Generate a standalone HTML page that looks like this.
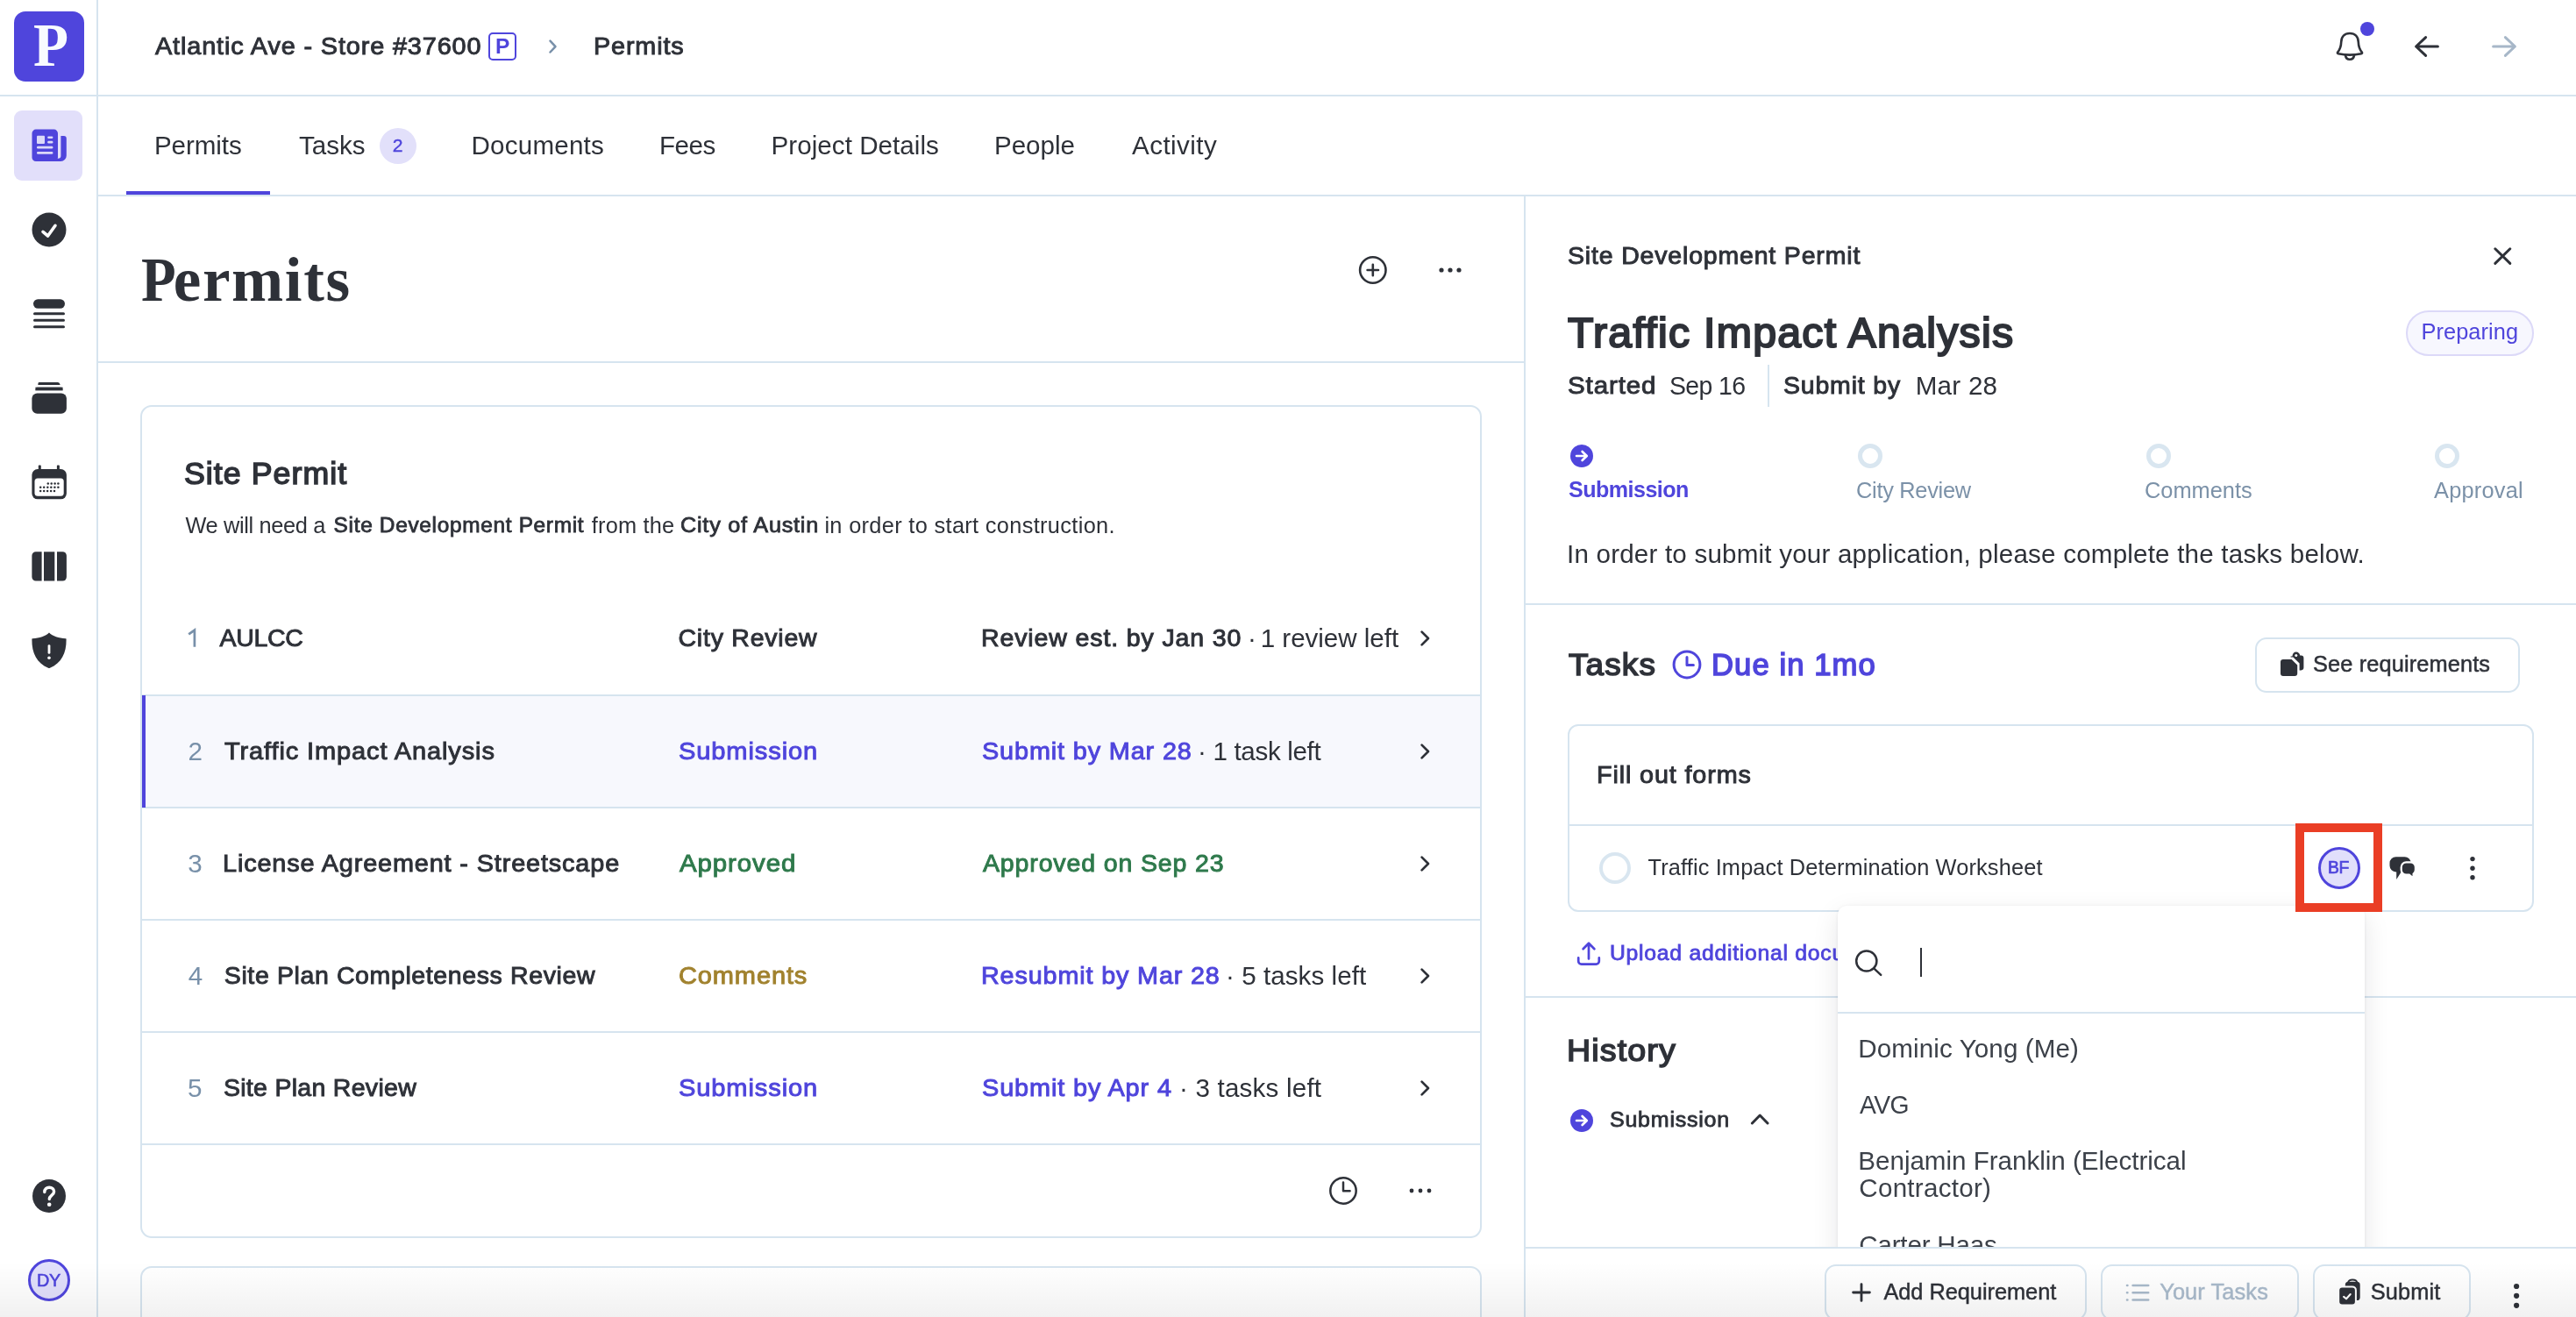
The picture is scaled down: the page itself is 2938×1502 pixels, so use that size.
<!DOCTYPE html>
<html><head><meta charset="utf-8"><title>Permits</title>
<style>
*{box-sizing:border-box;margin:0;padding:0}
html,body{width:2938px;height:1502px;overflow:hidden;background:#fff}
body{position:relative;font-family:"Liberation Sans",sans-serif;color:#2e3138}
.a{position:absolute}
.t{position:absolute;white-space:nowrap;line-height:1;display:block}
.ln{position:absolute;background:#d6e4ef}
svg{position:absolute;overflow:visible}
.card{position:absolute;border:2px solid #d6e4ef;background:#fff}
.btn{position:absolute;border:2px solid #d6e4ef;border-radius:13px;background:#fff;height:64px;top:1442px}
.ring{position:absolute;border-radius:50%;border:5px solid #d9e6f0;width:28px;height:28px;top:506px}
.av{position:absolute;border-radius:50%;border:3px solid #4f45dc;background:#e1dffb;width:48px;height:48px}
</style></head>
<body>
<div id="root" style="position:absolute;left:0;top:0;width:2938px;height:1502px;overflow:hidden;will-change:transform">
<!-- structural lines -->
<div class="ln" style="left:0;top:108px;width:2938px;height:2px"></div>
<div class="ln" style="left:110px;top:0;width:2px;height:1502px"></div>
<div class="ln" style="left:112px;top:222px;width:2826px;height:2px"></div>
<div class="ln" style="left:112px;top:412px;width:1626px;height:2px"></div>
<div class="ln" style="left:1738px;top:224px;width:2px;height:1278px"></div>
<div class="ln" style="left:1740px;top:688px;width:1198px;height:2px"></div>
<div class="ln" style="left:1740px;top:1136px;width:1198px;height:2px"></div>
<div class="a" style="left:144px;top:218px;width:164px;height:4px;background:#4f45dc"></div>

<!-- sidebar -->
<div class="a" style="left:16px;top:13px;width:80px;height:80px;border-radius:13px;background:#4f45dc"></div>
<div class="a" style="left:16px;top:126px;width:78px;height:80px;border-radius:9px;background:#e2dffa"></div>
<!-- newspaper -->
<svg style="left:36px;top:147px" width="41" height="38" viewBox="0 0 41 38">
<rect x="0.5" y="0.6" width="29.5" height="36.4" rx="4.5" fill="#4f45dc"/>
<path d="M33.4 8 h3.4 a3 3 0 0 1 3 3 v19.5 a6.5 6.5 0 0 1 -6.5 6.5 h-9 v-3.2 h6.1 a3 3 0 0 0 3 -3 z" fill="#4f45dc"/>
<rect x="6" y="7.8" width="9" height="9.2" rx="1" fill="#dcd9f8"/>
<rect x="18.2" y="8.4" width="6.2" height="2.6" rx="1.2" fill="#dcd9f8"/>
<rect x="18.2" y="13.8" width="6.2" height="2.6" rx="1.2" fill="#dcd9f8"/>
<rect x="6" y="19.8" width="18.4" height="2.8" rx="1.3" fill="#dcd9f8"/>
<rect x="6" y="26" width="18.4" height="2.8" rx="1.3" fill="#dcd9f8"/>
</svg>
<!-- check circle -->
<svg style="left:36px;top:242px" width="40" height="40" viewBox="0 0 40 40"><circle cx="20" cy="20" r="19.5" fill="#2e3138"/><path d="M13 22.4 L18.6 27 L27 15.3" fill="none" stroke="#fff" stroke-width="3.6" stroke-linecap="round" stroke-linejoin="round"/></svg>
<!-- list -->
<svg style="left:38px;top:341px" width="36" height="34" viewBox="0 0 36 34"><rect x="0" y="0.3" width="36" height="10.4" rx="5.2" fill="#2e3138"/><g stroke="#2e3138" stroke-width="3" stroke-linecap="round"><path d="M1.5 16.8H34.5M1.5 24.3H34.5M1.5 31.8H34.5"/></g></svg>
<!-- stack -->
<svg style="left:36px;top:435px" width="40" height="37" viewBox="0 0 40 37"><rect x="0.4" y="13.4" width="39.5" height="23.4" rx="6" fill="#2e3138"/><path d="M4.4 6.7 h31.2 v3.5 h-31.2z" fill="#2e3138"/><path d="M8.3 1 Q9 1 10 1 h20 q2 0 2.7 2.9 h-25.4 Q7.3 1 8.3 1z" fill="#2e3138"/><path d="M5.8 6.7 h28.4 l1.4 3.5 h-31.2z" fill="#2e3138"/></svg>
<!-- calendar -->
<svg style="left:36px;top:530px" width="40" height="40" viewBox="0 0 40 40"><rect x="0.4" y="5" width="39.5" height="34.3" rx="6.5" fill="#2e3138"/><rect x="7.8" y="0.6" width="3" height="8" rx="1" fill="#2e3138"/><rect x="28.9" y="0.6" width="3" height="8" rx="1" fill="#2e3138"/><rect x="3.5" y="15.6" width="33.2" height="20.2" rx="3.5" fill="#fff"/>
<g fill="#2e3138"><circle cx="18.8" cy="21.4" r="1.25"/><circle cx="22.7" cy="21.4" r="1.25"/><circle cx="26.6" cy="21.4" r="1.25"/><circle cx="30.4" cy="21.4" r="1.25"/><circle cx="10.2" cy="25.7" r="1.25"/><circle cx="14.2" cy="25.7" r="1.25"/><circle cx="18.3" cy="25.7" r="1.25"/><circle cx="22.3" cy="25.7" r="1.25"/><circle cx="26.4" cy="25.7" r="1.25"/><circle cx="30.4" cy="25.7" r="1.25"/><circle cx="10.2" cy="30.0" r="1.25"/><circle cx="14.2" cy="30.0" r="1.25"/><circle cx="18.1" cy="30.0" r="1.25"/><circle cx="22.1" cy="30.0" r="1.25"/><circle cx="26.0" cy="30.0" r="1.25"/></g></svg>
<!-- columns -->
<svg style="left:36px;top:629px" width="40" height="34" viewBox="0 0 40 34"><path d="M4.9 0.3 H11.6 V33.5 H4.9 A4.5 4.5 0 0 1 0.4 29 V4.8 A4.5 4.5 0 0 1 4.9 0.3z" fill="#2e3138"/><rect x="14" y="0.3" width="12.3" height="33.2" fill="#2e3138"/><path d="M29 0.3 H35.4 A4.5 4.5 0 0 1 39.9 4.8 V29 A4.5 4.5 0 0 1 35.4 33.5 H29z" fill="#2e3138"/></svg>
<!-- shield -->
<svg style="left:36px;top:721px" width="40" height="42" viewBox="0 0 40 42"><path d="M20 0.6 C16 4.6 9 7 1.2 7.2 C0.6 7.2 0.4 7.6 0.4 8.2 C0.2 24 6 35 19 40.8 Q20 41.3 21 40.8 C34 35 39.8 24 39.6 8.2 C39.6 7.6 39.4 7.2 38.8 7.2 C31 7 24 4.6 20 0.6z" fill="#2e3138"/><rect x="18.6" y="14.2" width="2.8" height="10.6" rx="1.4" fill="#fff"/><circle cx="20" cy="29.2" r="1.8" fill="#fff"/></svg>
<!-- help -->
<svg style="left:37px;top:1345px" width="38" height="38" viewBox="0 0 38 38"><circle cx="19" cy="19" r="19" fill="#2e3138"/><path d="M13.8 14.6 C13.8 11 16.2 9.3 19.2 9.3 C22.3 9.3 24.6 11.2 24.6 14 C24.6 18.2 19.3 18 19.3 22.6" fill="none" stroke="#fff" stroke-width="3.4" stroke-linecap="round"/><circle cx="19.2" cy="28.8" r="2.3" fill="#fff"/></svg>
<!-- DY avatar -->
<div class="av" style="left:32px;top:1436px"></div>


<!-- cards -->
<div class="card" style="left:160px;top:462px;width:1530px;height:950px;border-radius:13px"></div>
<div class="card" style="left:160px;top:1444px;width:1530px;height:120px;border-radius:13px"></div>
<div class="a" style="left:162px;top:794px;width:1526px;height:126px;background:#f7f8fd"></div>
<div class="ln" style="left:162px;top:792px;width:1526px;height:2px"></div>
<div class="ln" style="left:162px;top:920px;width:1526px;height:2px"></div>
<div class="ln" style="left:162px;top:1048px;width:1526px;height:2px"></div>
<div class="ln" style="left:162px;top:1176px;width:1526px;height:2px"></div>
<div class="ln" style="left:162px;top:1304px;width:1526px;height:2px"></div>
<div class="a" style="left:162px;top:793px;width:4px;height:128px;background:#4f45dc"></div>

<!-- panel -->
<div class="a" style="left:2744px;top:354px;width:146px;height:52px;border-radius:26px;border:2px solid #dcd9f8;background:#f7f7fe"></div>
<div class="ln" style="left:2016px;top:416px;width:2px;height:48px"></div>
<div class="ring" style="left:2119px"></div><div class="ring" style="left:2448px"></div><div class="ring" style="left:2777px"></div>
<div class="a" style="left:2572px;top:727px;width:302px;height:63px;border:2px solid #d6e4ef;border-radius:13px"></div>
<div class="card" style="left:1788px;top:826px;width:1102px;height:214px;border-radius:12px"></div>
<div class="ln" style="left:1790px;top:940px;width:1098px;height:2px"></div>
<div class="a" style="left:1824px;top:972px;width:36px;height:36px;border-radius:50%;border:4px solid #d9e6f0"></div>

<!-- P badge -->
<div class="a" style="left:557px;top:37px;width:32px;height:32px;border:2px solid #4f45dc;border-radius:5px"></div>
<svg style="left:620px;top:40px" width="20" height="28" viewBox="0 0 20 28"><path d="M7.5 6.7 L13.5 13.1 L7.5 19.5" fill="none" stroke="#7890a9" stroke-width="2.5" stroke-linecap="round" stroke-linejoin="round"/></svg>
<!-- tasks badge -->
<div class="a" style="left:433px;top:145.5px;width:42px;height:41px;border-radius:50%;background:#e2e0fa"></div>
<!-- bell -->
<svg style="left:2660px;top:32px" width="40" height="42" viewBox="0 0 40 42"><path d="M20 6 C14 6 10.4 10 10.2 16 C10 22 8.6 24.6 6.2 27.6 C5.6 28.4 6 29 7 29.2 C15 31 25 31 33 29.2 C34 29 34.4 28.4 33.8 27.6 C31.4 24.6 30 22 29.8 16 C29.6 10 26 6 20 6z" fill="none" stroke="#2e3138" stroke-width="2.6" stroke-linejoin="round"/><path d="M15 31 C15.4 34 17.4 35.8 20 35.8 C22.6 35.8 24.6 34 25 31" fill="none" stroke="#2e3138" stroke-width="2.6" stroke-linecap="round"/></svg>
<div class="a" style="left:2692px;top:25px;width:16px;height:16px;border-radius:50%;background:#4f45dc"></div>
<svg style="left:2750px;top:38px" width="36" height="30" viewBox="0 0 36 30"><path d="M5.6 15 H30.4 M16.6 4.6 L5.6 15 L16.6 25.4" fill="none" stroke="#2e3138" stroke-width="3" stroke-linecap="round" stroke-linejoin="round"/></svg>
<svg style="left:2838px;top:38px" width="36" height="30" viewBox="0 0 36 30"><path d="M5.6 15 H30.4 M19.4 4.6 L30.4 15 L19.4 25.4" fill="none" stroke="#a7b7c8" stroke-width="3" stroke-linecap="round" stroke-linejoin="round"/></svg>
<!-- title plus circle & dots -->
<svg style="left:1549px;top:291px" width="34" height="34" viewBox="0 0 34 34"><circle cx="16.8" cy="17" r="14.7" fill="none" stroke="#2e3138" stroke-width="2.6"/><path d="M16.8 10.8V23.2M10.6 17H23" stroke="#2e3138" stroke-width="2.6" stroke-linecap="round"/></svg>
<svg style="left:1640px;top:304px" width="30" height="8" viewBox="0 0 30 8"><g fill="#2e3138"><circle cx="4" cy="4" r="2.6"/><circle cx="14" cy="4" r="2.6"/><circle cx="24" cy="4" r="2.6"/></g></svg>
<!-- row chevrons -->
<svg style="left:1616px;top:718px" width="20" height="20" viewBox="0 0 20 20"><path d="M5.6 2.6 L13 10 L5.6 17.4" fill="none" stroke="#2e3138" stroke-width="2.7" stroke-linecap="round" stroke-linejoin="round"/></svg>
<svg style="left:1616px;top:847px" width="20" height="20" viewBox="0 0 20 20"><path d="M5.6 2.6 L13 10 L5.6 17.4" fill="none" stroke="#2e3138" stroke-width="2.7" stroke-linecap="round" stroke-linejoin="round"/></svg>
<svg style="left:1616px;top:975px" width="20" height="20" viewBox="0 0 20 20"><path d="M5.6 2.6 L13 10 L5.6 17.4" fill="none" stroke="#2e3138" stroke-width="2.7" stroke-linecap="round" stroke-linejoin="round"/></svg>
<svg style="left:1616px;top:1103px" width="20" height="20" viewBox="0 0 20 20"><path d="M5.6 2.6 L13 10 L5.6 17.4" fill="none" stroke="#2e3138" stroke-width="2.7" stroke-linecap="round" stroke-linejoin="round"/></svg>
<svg style="left:1616px;top:1231px" width="20" height="20" viewBox="0 0 20 20"><path d="M5.6 2.6 L13 10 L5.6 17.4" fill="none" stroke="#2e3138" stroke-width="2.7" stroke-linecap="round" stroke-linejoin="round"/></svg>
<!-- card footer clock & dots -->
<svg style="left:1515px;top:1341px" width="34" height="34" viewBox="0 0 34 34"><circle cx="17" cy="17" r="14.7" fill="none" stroke="#2e3138" stroke-width="2.5"/><path d="M17 7.4V17.2H24.6" fill="none" stroke="#2e3138" stroke-width="2.5" stroke-linecap="round" stroke-linejoin="round"/></svg>
<svg style="left:1606px;top:1354px" width="30" height="8" viewBox="0 0 30 8"><g fill="#2e3138"><circle cx="4" cy="4" r="2.4"/><circle cx="14" cy="4" r="2.4"/><circle cx="24" cy="4" r="2.4"/></g></svg>
<!-- panel close -->
<svg style="left:2840px;top:278px" width="28" height="28" viewBox="0 0 28 28"><path d="M5.8 5.8 L22.8 22.4 M22.8 5.8 L5.8 22.4" stroke="#2e3138" stroke-width="3" stroke-linecap="round"/></svg>
<!-- step 1 -->
<svg style="left:1791px;top:507px" width="26" height="26" viewBox="0 0 26 26"><circle cx="13" cy="13" r="13" fill="#4f45dc"/><path d="M7 13 H18.6 M13.6 8 L18.8 13 L13.6 18" fill="none" stroke="#fff" stroke-width="2.6" stroke-linecap="round" stroke-linejoin="round"/></svg>
<!-- tasks clock -->
<svg style="left:1907px;top:741px" width="34" height="34" viewBox="0 0 34 34"><circle cx="17" cy="17" r="14.9" fill="none" stroke="#4f45dc" stroke-width="3"/><path d="M17 8.4V17.4H24.4" fill="none" stroke="#4f45dc" stroke-width="3" stroke-linecap="round" stroke-linejoin="round"/></svg>
<!-- see requirements icon -->
<svg style="left:2600px;top:742px" width="29" height="30" viewBox="0 0 29 30"><path d="M12.6 6.4 H14.4 C14.8 3.6 16.4 1.6 18.8 1.6 C21.2 1.6 22.8 3.4 23.2 5.4 H24.4 A3 3 0 0 1 27.4 8.4 V19.4 A3 3 0 0 1 24.4 22.4 H22.6 V14.4 L15.4 7.6 H12.6z" fill="#2e3138"/><circle cx="18.8" cy="5.6" r="1.5" fill="#fff"/><path d="M4 10 H13.6 L20.2 16.4 V26 A3 3 0 0 1 17.2 29 H4 A3 3 0 0 1 1 26 V13 A3 3 0 0 1 4 10z" fill="#2e3138"/></svg>
<!-- chat icon -->
<svg style="left:2724px;top:975px" width="32" height="30" viewBox="0 0 32 30"><path d="M8.6 2.2 H18.6 A7.1 7.1 0 0 1 25.7 9.3 V12.3 A7.1 7.1 0 0 1 18.6 19.4 H14.6 L9.2 28 V19.4 H8.6 A7.1 7.1 0 0 1 1.5 12.3 V9.3 A7.1 7.1 0 0 1 8.6 2.2z" fill="#2e3138"/><path d="M20.4 8.4 H25.2 A5.7 5.7 0 0 1 30.9 14.1 V17 A5.7 5.7 0 0 1 28.6 21.6 V26.6 L23.8 22.7 H20.4 A5.7 5.7 0 0 1 14.7 17 V14.1 A5.7 5.7 0 0 1 20.4 8.4z" fill="#2e3138" stroke="#fff" stroke-width="2.2"/></svg>
<!-- kebab -->
<svg style="left:2816px;top:975px" width="8" height="30" viewBox="0 0 8 30"><g fill="#2e3138"><circle cx="4" cy="4.6" r="2.7"/><circle cx="4" cy="15.2" r="2.7"/><circle cx="4" cy="25.8" r="2.7"/></g></svg>
<!-- upload icon -->
<svg style="left:1797px;top:1072px" width="31" height="31" viewBox="0 0 31 31"><path d="M15 21.4 V4.4 M8.6 10.2 L15 3.8 L21.4 10.2" fill="none" stroke="#4f45dc" stroke-width="2.7" stroke-linecap="round" stroke-linejoin="round"/><path d="M3.2 20.4 V24.2 A3.4 3.4 0 0 0 6.6 27.6 H23.4 A3.4 3.4 0 0 0 26.8 24.2 V20.4" fill="none" stroke="#4f45dc" stroke-width="2.7" stroke-linecap="round" stroke-linejoin="round"/></svg>
<!-- history icon -->
<svg style="left:1791px;top:1265px" width="26" height="26" viewBox="0 0 26 26"><circle cx="13" cy="13" r="13" fill="#4f45dc"/><path d="M7 13 H18.6 M13.6 8 L18.8 13 L13.6 18" fill="none" stroke="#fff" stroke-width="2.6" stroke-linecap="round" stroke-linejoin="round"/></svg>
<svg style="left:1993px;top:1266px" width="28" height="20" viewBox="0 0 28 20"><path d="M5.4 15 L14.2 6 L23 15" fill="none" stroke="#2e3138" stroke-width="3" stroke-linecap="round" stroke-linejoin="round"/></svg>

<svg style="left:212px;top:714px" width="16" height="28" viewBox="0 0 16 28"><path d="M3.2 9.4 L9.9 4.6 V23.8" fill="none" stroke="#7890a9" stroke-width="2.7" stroke-linejoin="miter"/></svg>


<span class="t" style="left:176.7px;top:38.0px;font-size:28.47px;-webkit-text-stroke:0.97px #2e3138;color:#2e3138;letter-spacing:0.854px;transform:scaleX(1.0132);transform-origin:0 0;">Atlantic Ave - Store #37600</span>
<span class="t" style="left:677.2px;top:38.2px;font-size:28.47px;-webkit-text-stroke:0.97px #2e3138;color:#2e3138;letter-spacing:0.854px;transform:scaleX(1.0103);transform-origin:0 0;">Permits</span>
<span class="t" style="left:565.0px;top:40.6px;font-size:24.52px;font-weight:700;color:#4f45dc;letter-spacing:0.000px;transform:scaleX(1.0000);transform-origin:0 0;">P</span>
<span class="t" style="left:175.9px;top:150.9px;font-size:29.6px;color:#2e3138;letter-spacing:-0.067px;">Permits</span>
<span class="t" style="left:341.0px;top:150.9px;font-size:29.6px;color:#2e3138;letter-spacing:-0.012px;">Tasks</span>
<span class="t" style="left:447.7px;top:154.9px;font-size:21.14px;color:#4f45dc;letter-spacing:0.000px;-webkit-text-stroke:0.4px #4f45dc;">2</span>
<span class="t" style="left:537.5px;top:150.9px;font-size:29.6px;color:#2e3138;letter-spacing:0.203px;">Documents</span>
<span class="t" style="left:752.0px;top:150.9px;font-size:29.6px;color:#2e3138;letter-spacing:-0.498px;">Fees</span>
<span class="t" style="left:879.6px;top:150.9px;font-size:29.6px;color:#2e3138;letter-spacing:0.029px;">Project Details</span>
<span class="t" style="left:1134.0px;top:150.9px;font-size:29.6px;color:#2e3138;letter-spacing:-0.058px;">People</span>
<span class="t" style="left:1291.0px;top:150.9px;font-size:29.6px;color:#2e3138;letter-spacing:0.439px;">Activity</span>
<span class="t" style="left:160.6px;top:283.8px;font-size:71px;font-weight:700;font-family:'Liberation Serif',serif;color:#2e3138;letter-spacing:0.000px;transform:scaleX(0.9150);transform-origin:0 0;">P</span>
<span class="t" style="left:197.8px;top:283.8px;font-size:71px;font-weight:700;font-family:'Liberation Serif',serif;color:#2e3138;letter-spacing:1.612px;">ermits</span>
<span class="t" style="left:37.9px;top:16.2px;font-size:70.5px;font-weight:700;font-family:'Liberation Serif',serif;color:#f8fbff;letter-spacing:0.000px;transform:scaleX(0.9300);transform-origin:0 0;">P</span>
<span class="t" style="left:210.4px;top:523.0px;font-size:34.19px;-webkit-text-stroke:1.50px #2e3138;color:#2e3138;letter-spacing:1.026px;transform:scaleX(1.0437);transform-origin:0 0;">Site Permit</span>
<span class="t" style="left:211.4px;top:586.8px;font-size:25.37px;color:#2e3138;letter-spacing:-0.342px;">We will need a</span>
<span class="t" style="left:380.6px;top:587.2px;font-size:24.4px;-webkit-text-stroke:0.83px #2e3138;color:#2e3138;letter-spacing:0.692px;">Site Development Permit</span>
<span class="t" style="left:674.8px;top:586.8px;font-size:25.37px;color:#2e3138;letter-spacing:0.184px;">from the</span>
<span class="t" style="left:775.6px;top:587.2px;font-size:24.4px;-webkit-text-stroke:0.83px #2e3138;color:#2e3138;letter-spacing:0.732px;transform:scaleX(1.0356);transform-origin:0 0;">City of Austin</span>
<span class="t" style="left:940.4px;top:586.8px;font-size:25.37px;color:#2e3138;letter-spacing:0.326px;">in order to start construction.</span>
<span class="t" style="left:250.6px;top:713.4px;font-size:28.47px;-webkit-text-stroke:0.97px #2e3138;color:#2e3138;letter-spacing:-0.310px;">AULCC</span>
<span class="t" style="left:773.5px;top:713.4px;font-size:28.47px;-webkit-text-stroke:0.97px #2e3138;color:#2e3138;letter-spacing:0.778px;">City Review</span>
<span class="t" style="left:1119.0px;top:713.4px;font-size:28.47px;-webkit-text-stroke:0.97px #2e3138;color:#2e3138;letter-spacing:0.854px;transform:scaleX(1.0029);transform-origin:0 0;">Review est. by Jan 30</span>
<span class="t" style="left:1423.0px;top:712.9px;font-size:29.6px;color:#2e3138;letter-spacing:0.000px;">·</span>
<span class="t" style="left:1437.7px;top:712.9px;font-size:29.6px;color:#2e3138;letter-spacing:-0.031px;">1 review left</span>
<span class="t" style="left:214.5px;top:841.7px;font-size:29.6px;color:#7890a9;letter-spacing:0.000px;">2</span>
<span class="t" style="left:255.9px;top:842.2px;font-size:28.47px;-webkit-text-stroke:0.97px #2e3138;color:#2e3138;letter-spacing:0.854px;transform:scaleX(1.0197);transform-origin:0 0;">Traffic Impact Analysis</span>
<span class="t" style="left:773.5px;top:842.2px;font-size:28.47px;-webkit-text-stroke:0.97px #4f45dc;color:#4f45dc;letter-spacing:0.854px;transform:scaleX(1.0217);transform-origin:0 0;">Submission</span>
<span class="t" style="left:1120.0px;top:842.2px;font-size:28.47px;-webkit-text-stroke:0.97px #4f45dc;color:#4f45dc;letter-spacing:0.854px;transform:scaleX(1.0125);transform-origin:0 0;">Submit by Mar 28</span>
<span class="t" style="left:1366.0px;top:841.7px;font-size:29.6px;color:#2e3138;letter-spacing:-0.334px;">· 1 task left</span>
<span class="t" style="left:214.2px;top:969.9px;font-size:29.6px;color:#7890a9;letter-spacing:0.000px;">3</span>
<span class="t" style="left:253.9px;top:970.4px;font-size:28.47px;-webkit-text-stroke:0.97px #2e3138;color:#2e3138;letter-spacing:0.854px;transform:scaleX(1.0126);transform-origin:0 0;">License Agreement - Streetscape</span>
<span class="t" style="left:774.5px;top:970.4px;font-size:28.47px;-webkit-text-stroke:0.97px #2f7a4c;color:#2f7a4c;letter-spacing:0.854px;transform:scaleX(1.0356);transform-origin:0 0;">Approved</span>
<span class="t" style="left:1121.0px;top:970.4px;font-size:28.47px;-webkit-text-stroke:0.97px #2f7a4c;color:#2f7a4c;letter-spacing:0.854px;transform:scaleX(1.0016);transform-origin:0 0;">Approved on Sep 23</span>
<span class="t" style="left:214.7px;top:1097.7px;font-size:29.6px;color:#7890a9;letter-spacing:0.000px;">4</span>
<span class="t" style="left:255.8px;top:1098.2px;font-size:28.47px;-webkit-text-stroke:0.97px #2e3138;color:#2e3138;letter-spacing:0.628px;">Site Plan Completeness Review</span>
<span class="t" style="left:773.5px;top:1098.2px;font-size:28.47px;-webkit-text-stroke:0.97px #a1822e;color:#a1822e;letter-spacing:0.854px;transform:scaleX(1.0191);transform-origin:0 0;">Comments</span>
<span class="t" style="left:1119.0px;top:1098.2px;font-size:28.47px;-webkit-text-stroke:0.97px #4f45dc;color:#4f45dc;letter-spacing:0.854px;transform:scaleX(1.0097);transform-origin:0 0;">Resubmit by Mar 28</span>
<span class="t" style="left:1398.0px;top:1097.7px;font-size:29.6px;color:#2e3138;letter-spacing:0.053px;">· 5 tasks left</span>
<span class="t" style="left:214.0px;top:1225.9px;font-size:29.6px;color:#7890a9;letter-spacing:0.000px;">5</span>
<span class="t" style="left:254.9px;top:1226.4px;font-size:28.47px;-webkit-text-stroke:0.97px #2e3138;color:#2e3138;letter-spacing:0.311px;">Site Plan Review</span>
<span class="t" style="left:773.5px;top:1226.4px;font-size:28.47px;-webkit-text-stroke:0.97px #4f45dc;color:#4f45dc;letter-spacing:0.854px;transform:scaleX(1.0217);transform-origin:0 0;">Submission</span>
<span class="t" style="left:1120.0px;top:1226.4px;font-size:28.47px;-webkit-text-stroke:0.97px #4f45dc;color:#4f45dc;letter-spacing:0.854px;transform:scaleX(1.0143);transform-origin:0 0;">Submit by Apr 4</span>
<span class="t" style="left:1345.0px;top:1225.9px;font-size:29.6px;color:#2e3138;letter-spacing:0.192px;">· 3 tasks left</span>
<span class="t" style="left:1788.0px;top:277.3px;font-size:28.47px;-webkit-text-stroke:0.97px #2e3138;color:#2e3138;letter-spacing:0.838px;">Site Development Permit</span>
<span class="t" style="left:1788.0px;top:355.1px;font-size:48.27px;-webkit-text-stroke:2.12px #2e3138;color:#2e3138;letter-spacing:1.270px;">Traffic Impact Analysis</span>
<span class="t" style="left:2761.4px;top:366.3px;font-size:25.37px;color:#4f45dc;letter-spacing:0.093px;">Preparing</span>
<span class="t" style="left:1788.0px;top:425.1px;font-size:28.47px;-webkit-text-stroke:0.97px #2e3138;color:#2e3138;letter-spacing:0.854px;transform:scaleX(1.0364);transform-origin:0 0;">Started</span>
<span class="t" style="left:1904.0px;top:424.6px;font-size:29.6px;color:#2e3138;letter-spacing:-0.651px;transform:scaleX(0.9609);transform-origin:0 0;">Sep 16</span>
<span class="t" style="left:2033.9px;top:425.1px;font-size:28.47px;-webkit-text-stroke:0.97px #2e3138;color:#2e3138;letter-spacing:0.844px;">Submit by</span>
<span class="t" style="left:2184.7px;top:424.6px;font-size:29.6px;color:#2e3138;letter-spacing:0.251px;">Mar 28</span>
<span class="t" style="left:1788.7px;top:546.3px;font-size:25.37px;font-weight:700;color:#4f45dc;letter-spacing:-0.558px;transform:scaleX(0.9905);transform-origin:0 0;">Submission</span>
<span class="t" style="left:2117.0px;top:546.5px;font-size:25.37px;color:#7b91a8;letter-spacing:-0.285px;">City Review</span>
<span class="t" style="left:2446.0px;top:546.5px;font-size:25.37px;color:#7b91a8;letter-spacing:0.011px;">Comments</span>
<span class="t" style="left:2776.0px;top:546.5px;font-size:25.37px;color:#7b91a8;letter-spacing:0.221px;">Approval</span>
<span class="t" style="left:1787.0px;top:616.9px;font-size:29.6px;color:#2e3138;letter-spacing:0.193px;">In order to submit your application, please complete the tasks below.</span>
<span class="t" style="left:1789.3px;top:740.9px;font-size:34.19px;-webkit-text-stroke:1.50px #2e3138;color:#2e3138;letter-spacing:1.026px;transform:scaleX(1.0812);transform-origin:0 0;">Tasks</span>
<span class="t" style="left:1951.5px;top:740.9px;font-size:34.19px;-webkit-text-stroke:1.50px #4f45dc;color:#4f45dc;letter-spacing:1.026px;transform:scaleX(1.0151);transform-origin:0 0;">Due in 1mo</span>
<span class="t" style="left:2638.0px;top:744.5px;font-size:25.37px;color:#2e3138;letter-spacing:0.121px;-webkit-text-stroke:0.5px #2e3138;">See requirements</span>
<span class="t" style="left:1821.4px;top:869.4px;font-size:28.47px;-webkit-text-stroke:0.97px #2e3138;color:#2e3138;letter-spacing:0.854px;transform:scaleX(1.0105);transform-origin:0 0;">Fill out forms</span>
<span class="t" style="left:1879.5px;top:976.5px;font-size:25.37px;color:#2e3138;letter-spacing:0.137px;">Traffic Impact Determination Worksheet</span>
<span class="t" style="left:1786.8px;top:1181.3px;font-size:34.19px;-webkit-text-stroke:1.50px #2e3138;color:#2e3138;letter-spacing:1.026px;transform:scaleX(1.1007);transform-origin:0 0;">History</span>
<span class="t" style="left:1836.0px;top:1265.2px;font-size:24.4px;-webkit-text-stroke:0.83px #2e3138;color:#2e3138;letter-spacing:0.732px;transform:scaleX(1.0262);transform-origin:0 0;">Submission</span>
<span class="t" style="left:1836.0px;top:1074.9px;font-size:24.4px;-webkit-text-stroke:0.83px #4f45dc;color:#4f45dc;letter-spacing:0.732px;transform:scaleX(1.0137);transform-origin:0 0;">Upload additional documents</span>

<!-- dropdown -->
<div class="a" style="left:2096px;top:1033px;width:601px;height:420px;background:#fff;border-radius:10px 10px 0 0;box-shadow:0 10px 30px rgba(20,20,30,.10),0 1px 4px rgba(20,20,30,.08);overflow:hidden">
<div class="ln" style="left:0;top:121px;width:601px;height:2px"></div>
<div class="a" style="left:94px;top:48px;width:2px;height:33px;background:#2e3138"></div>
<svg style="left:18px;top:48px" width="34" height="34" viewBox="0 0 34 34"><circle cx="14.8" cy="15" r="11.6" fill="none" stroke="#2e3138" stroke-width="2.5"/><path d="M23.2 23.4 L31.2 30.8" stroke="#2e3138" stroke-width="2.5" stroke-linecap="round"/></svg>
<span class="t" style="left:23.3px;top:147.9px;font-size:29.6px;color:#3c4149;letter-spacing:0.100px;">Dominic Yong (Me)</span>
<span class="t" style="left:25.3px;top:211.5px;font-size:29.6px;color:#3c4149;letter-spacing:-0.651px;transform:scaleX(0.9565);transform-origin:0 0;">AVG</span>
<span class="t" style="left:23.3px;top:275.6px;font-size:29.6px;color:#3c4149;letter-spacing:-0.025px;">Benjamin Franklin (Electrical</span>
<span class="t" style="left:24.3px;top:307.4px;font-size:29.6px;color:#3c4149;letter-spacing:0.254px;">Contractor)</span>
<span class="t" style="left:24.3px;top:371.6px;font-size:29.6px;color:#3c4149;letter-spacing:-0.203px;">Carter Haas</span>
</div>
<!-- red highlight -->
<div class="a" style="left:2618px;top:939px;width:99px;height:101px;border:10px solid #ea3e25;background:#fff"></div>
<div class="av" style="left:2644px;top:966px"></div>
<!--ICONS-TOP-->

<!-- footer -->
<div class="a" style="left:1740px;top:1422px;width:1198px;height:80px;background:#fff"></div>
<div class="ln" style="left:1740px;top:1422px;width:1198px;height:2px"></div>
<div class="btn" style="left:2081px;width:299px"></div>
<div class="btn" style="left:2396px;width:226px"></div>
<div class="btn" style="left:2638px;width:180px"></div>
<svg style="left:2111px;top:1462px" width="24" height="24" viewBox="0 0 24 24"><path d="M12 2.6V21.4M2.6 12H21.4" stroke="#2e3138" stroke-width="2.8" stroke-linecap="round"/></svg>
<svg style="left:2423px;top:1460px" width="30" height="28" viewBox="0 0 30 28"><g stroke="#a9bacb" stroke-width="2.6" stroke-linecap="round"><path d="M9.6 6H27.2M9.6 14.3H27.2M9.6 22.5H27.2"/><path d="M3 6H3.4M3 14.3H3.4M3 22.5H3.4"/></g></svg>
<svg style="left:2666px;top:1459px" width="28" height="30" viewBox="0 0 28 30"><path d="M12.2 3.4 C12.6 1.2 14.6 0.4 17.2 0.4 C19.8 0.4 21.8 1.2 22.2 3.4" fill="none" stroke="#2e3138" stroke-width="2"/><rect x="8.8" y="2.8" width="16.9" height="21.2" rx="3.6" fill="#2e3138"/><rect x="1.2" y="8.4" width="19.7" height="21.2" rx="4" fill="#2e3138" stroke="#fff" stroke-width="2"/><path d="M7.1 19.9 L10 22.3 L14.7 17" fill="none" stroke="#fff" stroke-width="2.1" stroke-linecap="round" stroke-linejoin="round"/></svg>
<svg style="left:2866px;top:1462px" width="8" height="34" viewBox="0 0 8 34"><g fill="#2e3138"><circle cx="4.1" cy="5" r="3.1"/><circle cx="4.1" cy="15.8" r="3.1"/><circle cx="4.1" cy="26.8" r="3.1"/></g></svg>

<span class="t" style="left:2655.4px;top:980.2px;font-size:19.45px;color:#4f45dc;letter-spacing:-0.428px;transform:scaleX(0.9942);transform-origin:0 0;-webkit-text-stroke:0.7px #4f45dc;">BF</span>
<span class="t" style="left:2148.4px;top:1460.8px;font-size:25.37px;color:#2e3138;letter-spacing:-0.036px;-webkit-text-stroke:0.45px #2e3138;">Add Requirement</span>
<span class="t" style="left:2463.2px;top:1460.8px;font-size:25.37px;color:#a9bacb;letter-spacing:0.108px;-webkit-text-stroke:0.45px #a9bacb;">Your Tasks</span>
<span class="t" style="left:2703.8px;top:1460.8px;font-size:25.37px;color:#2e3138;letter-spacing:0.104px;-webkit-text-stroke:0.45px #2e3138;">Submit</span>
<span class="t" style="left:41.8px;top:1449.0px;font-size:21.14px;color:#4f45dc;letter-spacing:-0.465px;transform:scaleX(0.9392);transform-origin:0 0;-webkit-text-stroke:0.6px #4f45dc;">DY</span>
<div class="a" style="left:0;top:1440px;width:2938px;height:62px;background:linear-gradient(to bottom,rgba(0,0,0,0),rgba(0,0,0,.055))"></div>
</div>
</body></html>
